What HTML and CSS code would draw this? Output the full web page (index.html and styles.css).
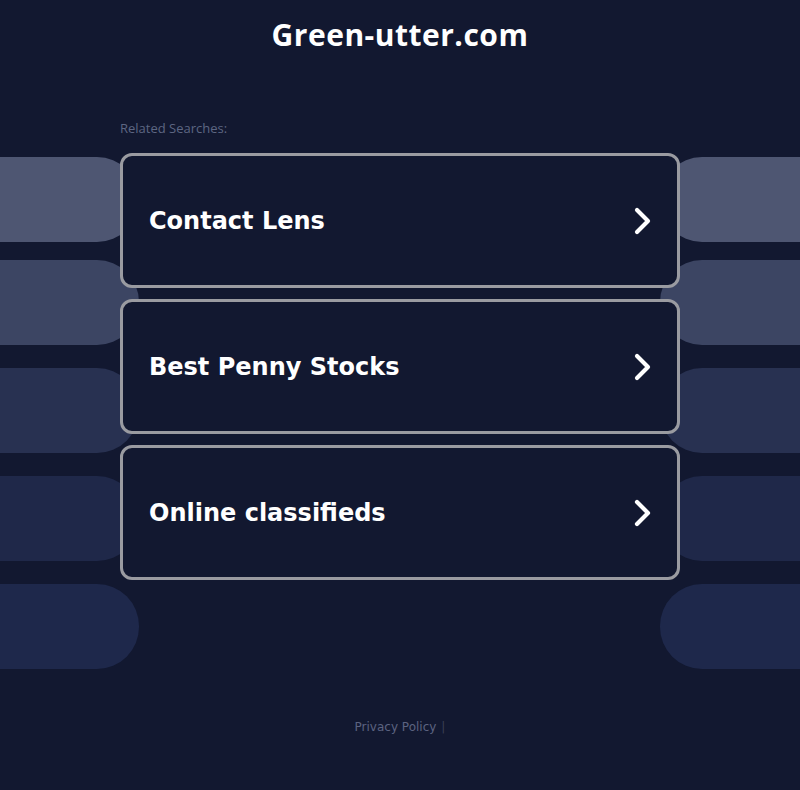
FILE: index.html
```html
<!DOCTYPE html>
<html>
<head>
<meta charset="utf-8">
<link rel="stylesheet" href="styles.css">
</head>
<body>
<div class="bg" aria-hidden="true">
  <div class="bg-row r1"><span class="pill left"></span><span class="pill right"></span></div>
  <div class="bg-row r2"><span class="pill left"></span><span class="pill right"></span></div>
  <div class="bg-row r3"><span class="pill left"></span><span class="pill right"></span></div>
  <div class="bg-row r4"><span class="pill left"></span><span class="pill right"></span></div>
  <div class="bg-row r5"><span class="pill left"></span><span class="pill right"></span></div>
</div>
<div class="page">
  <h1 class="title">Green-utter.com</h1>
  <div class="related">Related Searches:</div>
  <div class="cards">
    <a class="card" href="#"><span class="card-text">Contact Lens</span><svg class="chev" viewBox="0 0 20 28" width="20" height="28"><path d="M4 3 L15 14 L4 25" fill="none" stroke="#fff" stroke-width="4.2" stroke-linecap="round" stroke-linejoin="round"/></svg></a>
    <a class="card" href="#"><span class="card-text">Best Penny Stocks</span><svg class="chev" viewBox="0 0 20 28" width="20" height="28"><path d="M4 3 L15 14 L4 25" fill="none" stroke="#fff" stroke-width="4.2" stroke-linecap="round" stroke-linejoin="round"/></svg></a>
    <a class="card" href="#"><span class="card-text">Online classifieds</span><svg class="chev" viewBox="0 0 20 28" width="20" height="28"><path d="M4 3 L15 14 L4 25" fill="none" stroke="#fff" stroke-width="4.2" stroke-linecap="round" stroke-linejoin="round"/></svg></a>
  </div>
  <div class="footer"><a href="#" class="privacy">Privacy Policy</a><span class="sep">|</span></div>
</div>
</body>
</html>
```
FILE: styles.css
```css
html, body {
  margin: 0;
  padding: 0;
  background: #121830;
}
body {
  width: 800px;
  height: 790px;
  overflow: hidden;
  position: relative;
  font-family: "DejaVu Sans", sans-serif;
}
.bg {
  position: absolute;
  left: 0;
  top: 157px;
  width: 800px;
  z-index: 0;
}
.bg-row {
  display: flex;
  justify-content: space-between;
  height: 85px;
}
.bg-row.r2 { margin-top: 18px; }
.bg-row.r3, .bg-row.r4, .bg-row.r5 { margin-top: 23px; }
.pill {
  display: block;
  width: 139px;
  height: 85px;
}
.pill.left { border-radius: 0 42px 42px 0; }
.pill.right { border-radius: 42px 0 0 42px; width: 140px; }
.r1 .pill { background: #4e5672; }
.r2 .pill { background: #3c4563; }
.r3 .pill { background: #283151; }
.r4 .pill { background: #1f2849; }
.r5 .pill { background: #1e284b; }

.page {
  position: relative;
  z-index: 1;
  display: flex;
  flex-direction: column;
  align-items: center;
}
.title {
  margin: 15px 0 0;
  font-family: "Open Sans", sans-serif;
  font-weight: 700;
  font-size: 30px;
  line-height: 40px;
  color: #ffffff;
  letter-spacing: 0.5px;
}
.related {
  width: 560px;
  margin-top: 64px;
  font-family: "Open Sans", sans-serif;
  font-size: 13px;
  line-height: 18px;
  color: #5d6682;
}
.cards {
  margin-top: 16px;
  display: flex;
  flex-direction: column;
  gap: 11px;
}
.card {
  box-sizing: border-box;
  width: 560px;
  height: 135px;
  border: 3px solid #9a9ba1;
  border-radius: 12px;
  background: #121830;
  display: flex;
  align-items: center;
  justify-content: space-between;
  padding: 0 24px 0 26px;
  text-decoration: none;
}
.card-text {
  color: #ffffff;
  font-family: "DejaVu Sans", sans-serif;
  font-weight: 700;
  font-size: 24px;
}
.chev { display: block; }
.footer {
  margin-top: 139px;
  font-family: "DejaVu Sans", sans-serif;
  font-size: 12px;
  line-height: 16px;
  color: #5c6380;
}
.privacy {
  color: #5c6380;
  text-decoration: none;
}
.sep {
  margin-left: 5px;
  color: #3a3f55;
}
```
